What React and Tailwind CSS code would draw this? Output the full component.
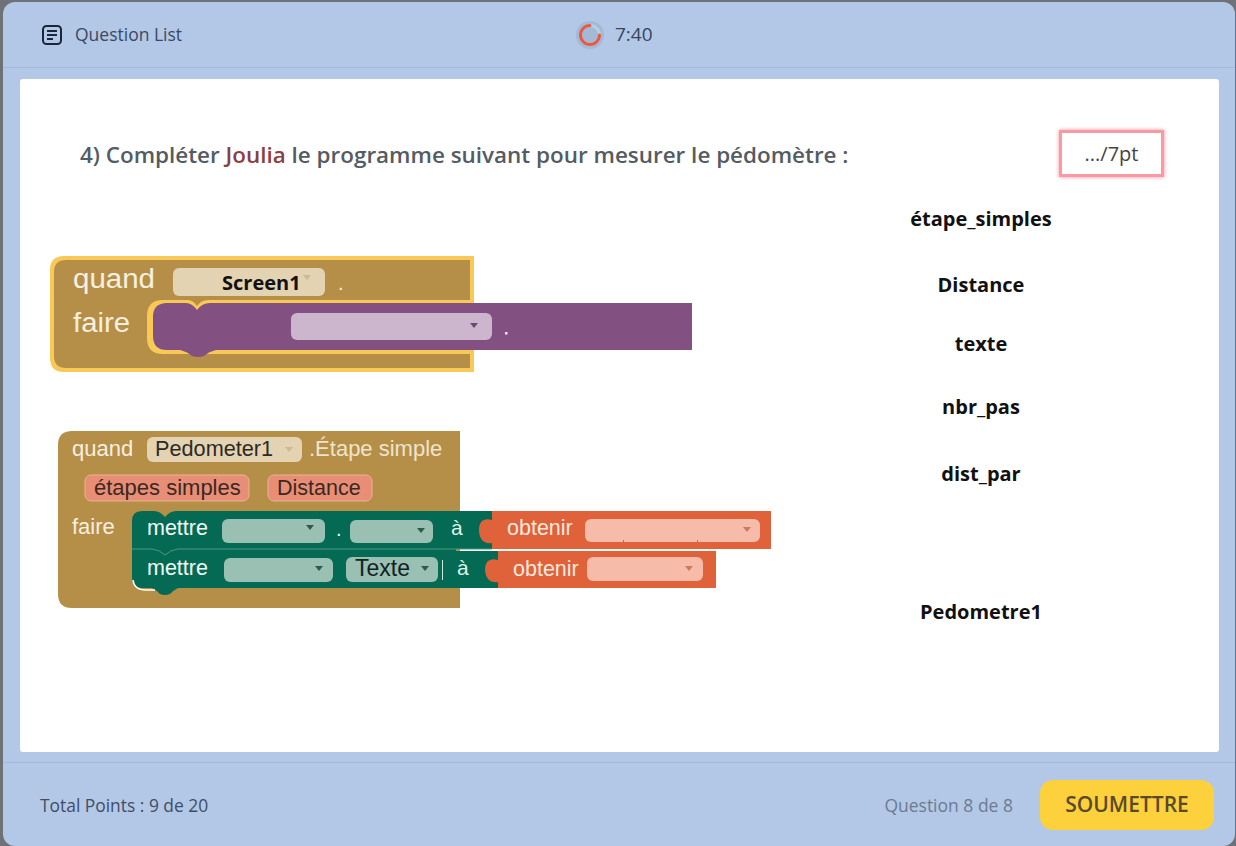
import React from "react";

const words = [
  { label: "étape_simples", cls: "mt-[22px]" },
  { label: "Distance", cls: "mt-[39px]" },
  { label: "texte", cls: "mt-[32px]" },
  { label: "nbr_pas", cls: "mt-[36px]" },
  { label: "dist_par", cls: "mt-[40px]" },
  { label: "Pedometre1", cls: "mt-[111px]" },
];

const Caret = ({ x, y, fill }) => (
  <polygon points={`${x - 4},${y - 2} ${x + 4},${y - 2} ${x},${y + 3}`} fill={fill} />
);

const Pill = ({ x, y, w, h, fill, stroke, r = 6 }) => (
  <rect x={x} y={y} width={w} height={h} rx={r} fill={fill} stroke={stroke} />
);

const Label = ({ x, y, size = 22, fill = "#f7efe0", children, width }) => (
  <text
    x={x}
    y={y}
    fontSize={size}
    fill={fill}
    textLength={width}
    lengthAdjust={width ? "spacingAndGlyphs" : undefined}
  >
    {children}
  </text>
);

// the two App Inventor blocks, drawn in page coordinates
const Blocks = () => (
  <svg
    width="725"
    height="365"
    viewBox="50 250 725 365"
    className="shrink-0 font-['Liberation_Sans',sans-serif]"
  >
    {/* Screen1 block */}
    <path d="M64 256H474V372H64Q50 372 50 358V270Q50 256 64 256Z" fill="#f8c957" />
    <path d="M66 260H470V368H66Q54 368 54 356V272Q54 260 66 260Z" fill="#b58f47" />
    <path d="M163 300H188Q193 300 197 306Q201 300 208 300H474V354H163Q147 354 147 338V316Q147 300 163 300Z" fill="#f8c957" />
    <path
      d="M167 303H186Q192 303 197 310Q202 303 210 303H692V350H216Q208 352 204 356Q198 358 192 356Q188 352 180 350H167Q153 350 153 336V317Q153 303 167 303Z"
      fill="#825081"
    />
    <Label x={73} y={288} size={27} width={82}>quand</Label>
    <Label x={73} y={332} size={27} width={57}>faire</Label>
    <Pill x={173} y={268} w={152} h={28} fill="#e3d3b2" />
    <text x={222} y={290} fontSize={20} fontWeight={700} fill="#111" className="font-['Open_Sans',sans-serif]">
      Screen1
    </text>
    <Caret x={307} y={277} fill="#cbb993" />
    <Label x={338} y={290} size={20}>.</Label>
    <Pill x={291} y={313} w={201} h={27} fill="#ccb6cd" />
    <Caret x={474} y={325} fill="#6a4a70" />
    <rect x={505} y={332} width={2.5} height={2.5} fill="#fbeafb" />

    {/* Pedometer1 block */}
    <path d="M72 431H460V608H72Q58 608 58 594V445Q58 431 72 431Z" fill="#b58f47" />
    <Label x={72} y={456} size={22}>quand</Label>
    <Pill x={147} y={437} w={155} h={25} fill="#e3d3b2" />
    <Label x={155} y={456} size={21.7} fill="#2c2a22">Pedometer1</Label>
    <Caret x={289} y={449} fill="#cbb993" />
    <Label x={309} y={456} size={22} fill="#efe3cc">.Étape simple</Label>
    <Pill x={85} y={475} w={164} h={26} fill="#e98e76" stroke="#e6b48f" />
    <Label x={94} y={495} size={22} fill="#3b2820">étapes simples</Label>
    <Pill x={268} y={475} w={104} h={26} fill="#e98e76" stroke="#e6b48f" />
    <Label x={277} y={495} size={21.5} fill="#3b2820">Distance</Label>
    <Label x={72} y={534} size={22}>faire</Label>

    {/* mettre rows */}
    <path
      d="M142 511H154Q160 511 165 517Q170 511 176 511H492V549H456V588H178Q174 590 170 594Q165 596 160 594Q156 590 152 588H142Q132 588 132 578V521Q132 511 142 511Z"
      fill="#046a53"
    />
    <path d="M133 580Q134 590 146 590H155" fill="none" stroke="#fff" strokeWidth="1.5" />
    <rect x={456} y={551} width={42} height={37} fill="#046a53" />
    <path d="M132 549H152Q160 550 165 555Q170 550 178 549H492" fill="none" stroke="#4e9783" strokeWidth="1" />
    <Label x={147} y={535} size={21.5} fill="#f3fbf7">mettre</Label>
    <Pill x={222} y={519} w={103} h={24} fill="#9abfb3" />
    <Caret x={310} y={527} fill="#2f5a4e" />
    <Label x={336} y={536} size={20} fill="#f3fbf7">.</Label>
    <Pill x={350} y={520} w={83} h={23} fill="#9abfb3" />
    <Caret x={421} y={530} fill="#2f5a4e" />
    <Label x={451} y={535} size={21} fill="#dff3ea">à</Label>

    <Label x={147} y={575} size={21.5} fill="#f3fbf7">mettre</Label>
    <Pill x={224} y={558} w={109} h={24} fill="#9abfb3" />
    <Caret x={319} y={568} fill="#2f5a4e" />
    <Pill x={346} y={557} w={92} h={25} fill="#9abfb3" />
    <Label x={355} y={576} size={23} fill="#12231e">Texte</Label>
    <Caret x={425} y={568} fill="#2f5a4e" />
    <rect x={442} y={560} width={1} height={20} fill="#cfe5dc" />
    <Label x={457} y={575} size={21} fill="#dff3ea">à</Label>

    {/* obtenir blocks */}
    <path
      d="M492 511H771V549H492V543Q486 544 482 540Q479 536 479 530Q479 524 482 521Q486 518 492 520Z"
      fill="#e0623a"
    />
    <Label x={507} y={535} size={21.5} fill="#fbe9df">obtenir</Label>
    <Pill x={585} y={519} w={175} h={23} fill="#f6bca9" />
    <rect x={623} y={540} width={1} height={2} fill="#a8705c" />
    <rect x={697} y={540} width={1} height={2} fill="#a8705c" />
    <Caret x={747} y={529} fill="#cd7a60" />
    <path
      d="M498 551H716V588H498V582Q492 583 488 579Q485 575 485 570Q485 564 488 561Q492 558 498 560Z"
      fill="#e0623a"
    />
    <Label x={513} y={576} size={21.5} fill="#fbe9df">obtenir</Label>
    <Pill x={587} y={557} w={116} h={24} fill="#f6bca9" />
    <Caret x={689} y={568} fill="#cd7a60" />
  </svg>
);

const App = () => {
  return (
    <div className="w-[1236px] h-[846px] overflow-hidden bg-[#6e7276] pt-[2px] pl-[3px] pr-[1px] font-['Open_Sans',sans-serif]">
      <div className="flex flex-col h-[844px] bg-[#b3c8e6] rounded-[12px]">
        <header className="flex items-center h-[66px] shrink-0 border-b border-[#a0b9dc] pl-[39px]">
          <div className="flex items-center gap-[13px] w-[533px] text-[17.5px] text-[#3a4a63]">
            <svg width="20" height="20" viewBox="0 0 20 20" fill="none" stroke="#1b2738" strokeWidth="2">
              <rect x="1" y="1" width="18" height="18" rx="3.5" />
              <path d="M5 6H15M5 10H15M5 14H11" />
            </svg>
            Question List
          </div>
          <div className="flex items-center gap-[10px] text-[19px] text-[#36465e]">
            <svg width="30" height="30" viewBox="0 0 30 30" fill="none">
              <circle cx="15" cy="15" r="14" fill="#a3b9d6" />
              <circle cx="15" cy="15" r="9.5" stroke="#b4cfe6" strokeWidth="3" />
              <path
                d="M24.5 15A9.5 9.5 0 1 1 15 5.5"
                stroke="#e8593f"
                strokeWidth="3"
                strokeLinecap="round"
              />
            </svg>
            7:40
          </div>
        </header>

        <main className="h-[673px] mt-[11px] ml-[17px] mr-[16px] shrink-0 bg-white rounded-[3px] overflow-hidden">
          <div className="flex items-center justify-between pt-[51px] pl-[60px] pr-[55px]">
            <h2 className="mt-[2px] text-[22.45px] font-semibold text-[#555b63] whitespace-nowrap">
              4) Compléter <span className="text-[#8a3f44]">Joulia</span> le programme suivant pour mesurer le pédomètre :
            </h2>
            <div className="flex items-center justify-center w-[105px] h-[47px] border-[3px] border-[#f79aa6] shadow-[0_0_4px_#f98f9c] text-[20px] text-[#444]">
              .../7pt
            </div>
          </div>
          <div className="flex items-start mt-[6px] pl-[30px]">
            <div className="mt-[67px]">
              <Blocks />
            </div>
            <div className="flex flex-col items-center w-[300px] ml-[56px] text-[20px] font-bold leading-[27px] text-[#111]">
              {words.map((w) => (
                <div key={w.label} className={w.cls}>
                  {w.label}
                </div>
              ))}
            </div>
          </div>
        </main>

        <footer className="flex items-center justify-between flex-1 mt-[10px] pt-[1px] border-t border-[#a0b9dc] pl-[37px] pr-[21px]">
          <span className="mt-[1px] text-[17.4px] text-[#3f4e66]">Total Points : 9 de 20</span>
          <div className="flex items-center gap-[27px]">
            <span className="mt-[1px] text-[17.5px] text-[#6d7b92]">Question 8 de 8</span>
            <button className="w-[174px] h-[50px] rounded-[13px] bg-[#fdd13c] text-[21px] font-semibold text-[#5a4a2c]">
              SOUMETTRE
            </button>
          </div>
        </footer>
      </div>
    </div>
  );
};

export default App;
